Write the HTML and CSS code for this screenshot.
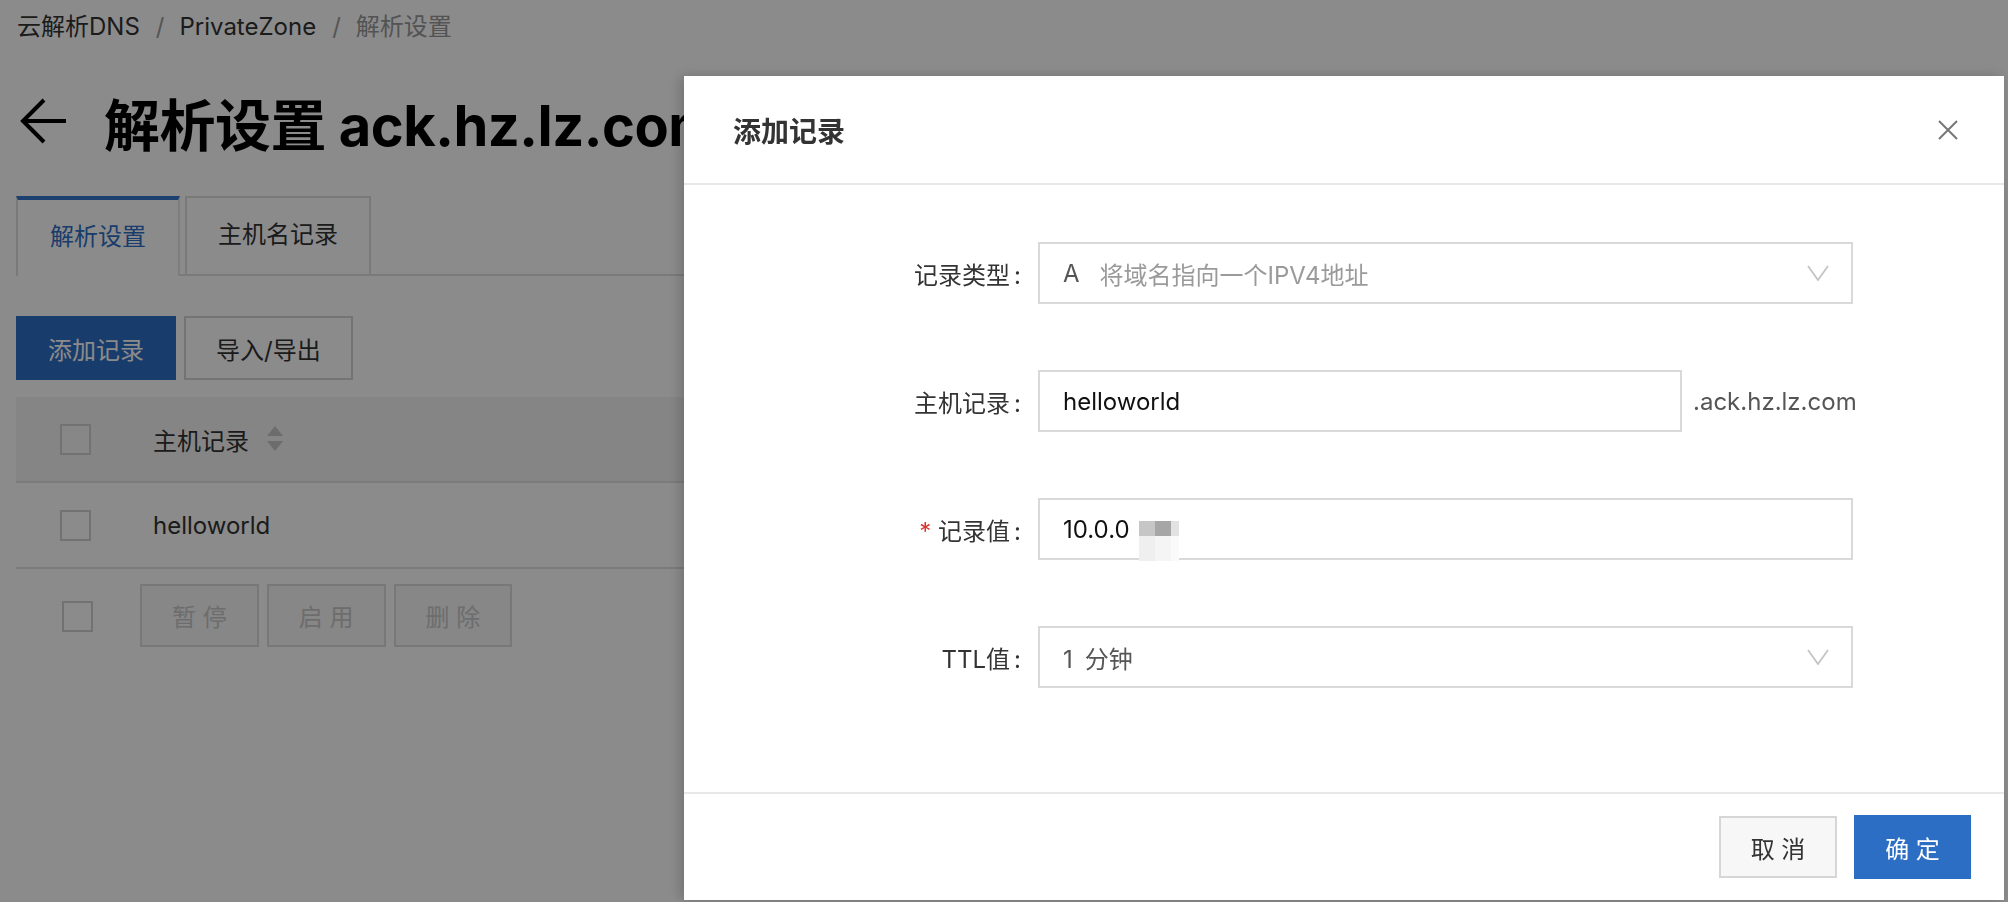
FILE: index.html
```html
<!DOCTYPE html>
<html lang="zh-CN">
<head>
  <meta charset="UTF-8">
  <title>解析设置</title>
  <link rel="stylesheet" href="styles.css">
</head>
<body>

  <div class="page">
    <div class="breadcrumb">
      <span>云解析DNS</span><span class="sep">/</span><span>PrivateZone</span><span class="sep">/</span><span class="current">解析设置</span>
    </div>

    <div class="page-head">
      <svg class="back" width="50" height="48" viewBox="0 0 50 48">
        <path d="M47 24 H4 M25 3 L4 24 L25 45" fill="none" stroke="#000" stroke-width="4"/>
      </svg>
      <h1>解析设置 ack.hz.lz.com</h1>
    </div>

    <div class="tabs">
      <div class="tab active">解析设置</div>
      <div class="tab">主机名记录</div>
    </div>

    <div class="toolbar">
      <button class="btn btn-primary">添加记录</button>
      <button class="btn">导入/导出</button>
    </div>

    <div class="table">
      <div class="row head">
        <span class="checkbox"></span>
        <span class="cell">主机记录</span>
        <span class="sort">
          <svg width="16" height="26" viewBox="0 0 16 26">
            <path d="M8 0 L16 10 H0 Z M0 15 H16 L8 25 Z" fill="#c6c6c6"/>
          </svg>
        </span>
      </div>
      <div class="row">
        <span class="checkbox"></span>
        <span class="cell">helloworld</span>
      </div>
      <div class="row foot">
        <span class="checkbox"></span>
        <button class="btn btn-disabled">暂 停</button>
        <button class="btn btn-disabled">启 用</button>
        <button class="btn btn-disabled">删 除</button>
      </div>
    </div>
  </div>

  <div class="mask"></div>

  <div class="dialog">
    <div class="dialog-head">
      <span class="dialog-title">添加记录</span>
      <svg class="close" width="24" height="24" viewBox="0 0 24 24">
        <path d="M3 3 L21 21 M21 3 L3 21" stroke="#777" stroke-width="2"/>
      </svg>
    </div>

    <div class="dialog-body">
      <div class="form-row">
        <label class="form-label">记录类型<span class="colon">:</span></label>
        <div class="field select">
          <span class="type">A</span>
          <span class="hint">将域名指向一个IPV4地址</span>
          <svg class="chevron" width="22" height="16" viewBox="0 0 22 16">
            <polyline points="1,1 11,15 21,1" fill="none" stroke="#c4c4c4" stroke-width="1.8"/>
          </svg>
        </div>
      </div>

      <div class="form-row">
        <label class="form-label">主机记录<span class="colon">:</span></label>
        <div class="field host">helloworld</div>
        <span class="suffix">.ack.hz.lz.com</span>
      </div>

      <div class="form-row">
        <label class="form-label"><span class="required">*</span> 记录值<span class="colon">:</span></label>
        <div class="field">
          10.0.0
          <div class="mosaic">
            <span class="m1"></span><span class="m2"></span><span class="m3"></span>
            <span class="m4"></span><span class="m5"></span><span class="m6"></span>
          </div>
        </div>
      </div>

      <div class="form-row">
        <label class="form-label">TTL值<span class="colon">:</span></label>
        <div class="field select">
          <span class="ttl"><span class="num">1</span>分钟</span>
          <svg class="chevron" width="22" height="16" viewBox="0 0 22 16">
            <polyline points="1,1 11,15 21,1" fill="none" stroke="#c4c4c4" stroke-width="1.8"/>
          </svg>
        </div>
      </div>
    </div>

    <div class="dialog-foot">
      <button class="btn btn-cancel">取 消</button>
      <button class="btn btn-ok">确 定</button>
    </div>
  </div>

</body>
</html>
```

FILE: styles.css
```css
body {
  margin: 0;
  background: #fff;
  font-family: Inter, "Noto Sans CJK SC", sans-serif;
  font-size: 24px;
  color: #333;
  overflow: hidden;
}
.page {
  padding-left: 16px;
  width: 1984px;
}
.breadcrumb {
  height: 54px;
  line-height: 54px;
  padding-left: 1px;
  color: #333;
}
.breadcrumb .sep {
  margin: 0 15px 0 16px;
  color: #9c9c9c;
}
.breadcrumb .current {
  color: #999;
}
.page-head {
  height: 134px;
  padding-bottom: 8px;
  display: flex;
  align-items: center;
}
.back {
  margin-left: 3px;
  margin-right: 35px;
}
.page-head h1 {
  margin: 0;
  font-size: 56px;
  font-weight: 700;
  color: #000;
  white-space: nowrap;
  letter-spacing: -0.5px;
}
.tabs {
  display: flex;
  gap: 5px;
  height: 78px;
  border-bottom: 2px solid #e0e0e0;
}
.tab {
  padding: 0 31px;
  line-height: 74px;
  border: 2px solid #dedede;
  border-bottom: none;
  background: #fff;
  color: #333;
  margin-bottom: -2px;
  height: 78px;
  box-sizing: border-box;
}
.tab.active {
  border-top: 4px solid #3476cc;
  border-right-color: #e6e6e6;
  color: #2f6fc6;
  height: 80px;
  padding: 0 32px;
}
.toolbar {
  display: flex;
  gap: 8px;
  margin-top: 40px;
  height: 64px;
}
.btn {
  font-family: inherit;
  font-size: 24px;
  height: 64px;
  padding: 0 30px;
  border: 2px solid #d5d5d5;
  background: #fff;
  color: #333;
  border-radius: 0;
}
.btn-primary {
  background: #2c6ec4;
  border-color: #2c6ec4;
  color: #fff;
}
.table {
  margin-top: 17px;
}
.row {
  display: flex;
  align-items: center;
  height: 84px;
  border-bottom: 2px solid #e2e2e2;
}
.row.head {
  background: #f4f4f4;
}
.checkbox {
  width: 31px;
  height: 31px;
  box-sizing: border-box;
  border: 2px solid #d2d2d2;
  background: #fff;
  margin-left: 44px;
  margin-right: 62px;
}
.row.head .checkbox {
  background: #f7f7f7;
}
.sort {
  display: flex;
  margin-left: 18px;
}
.row.foot {
  border-bottom: none;
  align-items: flex-start;
  padding-top: 15px;
  gap: 8px;
}
.row.foot .checkbox {
  margin-top: 17px;
  margin-left: 46px;
  margin-right: 39px;
}
.btn-disabled {
  height: 63px;
  padding: 0 30px;
  background: #f7f7f7;
  border-color: #dcdcdc;
  color: #c8c8c8;
}
.mask {
  position: fixed;
  inset: 0;
  background: rgba(0, 0, 0, 0.455);
}
.dialog {
  position: fixed;
  left: 684px;
  top: 76px;
  width: 1320px;
  height: 824px;
  background: #fff;
  display: flex;
  flex-direction: column;
  box-shadow: -4px 0 12px rgba(0, 0, 0, 0.18);
}
.dialog-head {
  height: 107px;
  border-bottom: 2px solid #e8e8e8;
  display: flex;
  align-items: center;
  justify-content: space-between;
  padding: 0 44px 0 49px;
}
.dialog-title {
  font-size: 28px;
  font-weight: 600;
  color: #333;
}
.dialog-body {
  flex: 1;
  padding-top: 57px;
}
.form-row {
  display: flex;
  align-items: center;
  height: 62px;
  margin-bottom: 66px;
}
.form-label {
  width: 337px;
  margin-right: 17px;
  text-align: right;
  color: #333;
}
.colon {
  margin-left: 4px;
}
.required {
  color: #d9332b;
}
.field {
  position: relative;
  width: 815px;
  height: 62px;
  box-sizing: border-box;
  border: 2px solid #d9d9d9;
  padding: 0 24px 0 23px;
  display: flex;
  align-items: center;
  color: #111;
}
.field.host {
  width: 644px;
}
.suffix {
  margin-left: 11px;
  color: #555;
}
.select .type {
  color: #555;
  margin-right: 20px;
}
.select .hint {
  color: #9a9a9a;
}
.select .ttl {
  color: #555;
}
.ttl .num {
  margin-right: 12px;
}
.chevron {
  margin-left: auto;
  margin-right: -2px;
}
.mosaic {
  position: absolute;
  left: 99px;
  top: 21px;
  display: grid;
  grid-template-columns: 16px 16px 8px;
  grid-template-rows: 15px 25px;
}
.m1 { background: #c6c6c6; }
.m2 { background: #a6a6a6; }
.m3 { background: #e2e2e2; }
.m4 { background: #efefef; }
.m5 { background: #f5f5f5; }
.m6 { background: #fafafa; }
.dialog-foot {
  border-top: 2px solid #e8e8e8;
  height: 106px;
  display: flex;
  align-items: center;
  justify-content: flex-end;
  gap: 17px;
  padding-right: 33px;
}
.btn-cancel {
  width: 118px;
  height: 62px;
  padding: 0;
  background: #f7f7f7;
  border-color: #d6d6d6;
  color: #333;
}
.btn-ok {
  width: 117px;
  height: 64px;
  padding: 0;
  background: #2c6ec4;
  border-color: #2c6ec4;
  color: #fff;
}
```
